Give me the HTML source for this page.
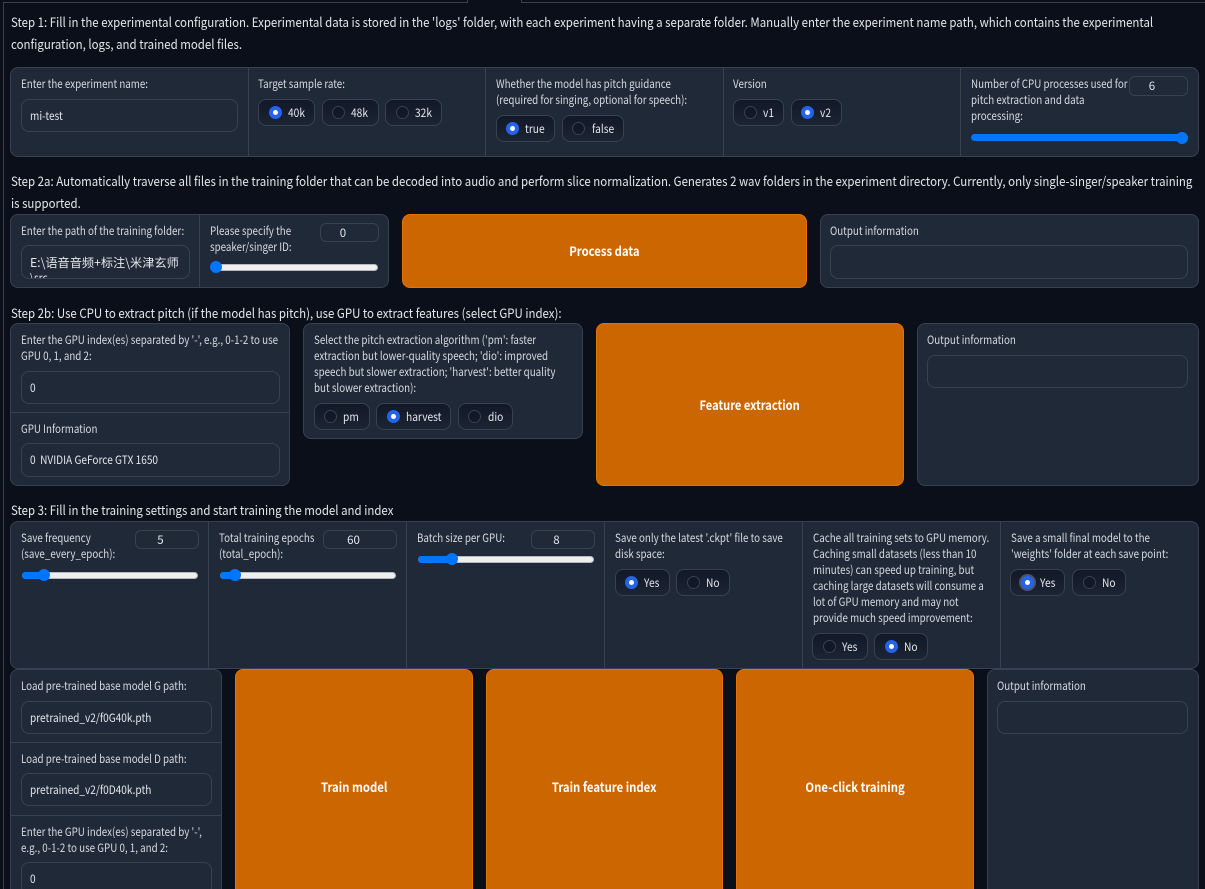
<!DOCTYPE html>
<html><head><meta charset="utf-8"><style>
html,body{margin:0;padding:0;width:1205px;height:889px;overflow:hidden;background:#0b0f19}
body{position:relative;font-family:"Noto Sans CJK SC","Liberation Sans",sans-serif;color:#e5e7eb;-webkit-font-smoothing:auto}
div,span{position:absolute;box-sizing:border-box}
.p{background:#1f2937;border:1px solid #374151;border-radius:8px}
.l{background:#374151}
.s{font-size:13px;line-height:22px;height:22px;white-space:nowrap;color:#e5e7eb;left:11px;transform-origin:0 50%;transform:scaleX(.881)}
.t{font-size:11.5px;line-height:16px;height:16px;white-space:nowrap;color:#d8dbe0;transform-origin:0 50%;transform:scaleX(.85)}
.i{border:1px solid #374151;border-radius:8px;background:#1f2937}
.v{font-size:11.5px;line-height:16px;height:16px;white-space:nowrap;color:#e5e7eb;transform-origin:0 50%;transform:scaleX(.877)}
.n{border:1px solid #374151;border-radius:6px;background:#1f2937;font-size:11.5px;line-height:19px;text-align:center;padding-right:13px;color:#e5e7eb}
.b{background:#cc6600;border:1px solid #e67300;border-radius:8px;color:#fff;font-size:13px;font-weight:700;display:flex;align-items:center;justify-content:center}
.b span{white-space:nowrap;transform:translateY(-1px) scaleX(.87)}
.r{height:27px;top:0;border:1px solid #374151;border-radius:8px;background:linear-gradient(180deg,#111827,#1c2534)}
.c{width:13px;height:13px;border-radius:50%;background:#111827;border:1px solid #374151}
.k{width:13px;height:13px;border-radius:50%;background:#2563eb;}
.k:after{content:"";position:absolute;left:4px;top:4px;width:5px;height:5px;border-radius:50%;background:#fff}
.o{font-size:11.5px;line-height:16px;white-space:nowrap;color:#e5e7eb;transform-origin:0 50%;transform:scaleX(.887)}
.tr{height:7px;border-radius:4px;background:#efefef;border:1px solid #b5b8bd}
.f{height:7px;border-radius:4px;background:#0075ff}
.h{width:12px;height:12px;border-radius:50%;background:#0075ff}
</style></head><body>

<div class="l" style="left:3px;top:2px;width:1px;height:887px"></div>
<div class="l" style="left:3px;top:2px;width:465px;height:1px"></div>
<div class="l" style="left:467px;top:0;width:1px;height:3px"></div>
<div class="l" style="left:521px;top:0;width:1px;height:3px"></div>
<div class="l" style="left:521px;top:2px;width:684px;height:1px"></div>

<div class="s" style="top:11px">Step 1: Fill in the experimental configuration. Experimental data is stored in the 'logs' folder, with each experiment having a separate folder. Manually enter the experiment name path, which contains the experimental</div>
<div class="s" style="top:33px">configuration, logs, and trained model files.</div>

<div class="p" style="left:10px;top:67px;width:1189px;height:90px"></div>
<div class="l" style="left:248px;top:68px;width:1px;height:88px"></div>
<div class="l" style="left:485px;top:68px;width:1px;height:88px"></div>
<div class="l" style="left:723px;top:68px;width:1px;height:88px"></div>
<div class="l" style="left:960px;top:68px;width:1px;height:88px"></div>

<div class="t" style="left:21px;top:76px">Enter the experiment name:</div>
<div class="i" style="left:21px;top:99px;width:217px;height:33px"></div>
<div class="v" style="left:30px;top:108px">mi-test</div>

<div class="t" style="left:258px;top:76px">Target sample rate:</div>
<div class="r" style="left:258px;top:99px;width:57px"></div><div class="k" style="left:269px;top:106px"></div><div class="o" style="left:288px;top:105px">40k</div>
<div class="r" style="left:322px;top:99px;width:57px"></div><div class="c" style="left:332px;top:106px"></div><div class="o" style="left:351px;top:105px">48k</div>
<div class="r" style="left:385px;top:99px;width:57px"></div><div class="c" style="left:396px;top:106px"></div><div class="o" style="left:415px;top:105px">32k</div>

<div class="t" style="left:496px;top:76px">Whether the model has pitch guidance</div>
<div class="t" style="left:496px;top:92px">(required for singing, optional for speech):</div>
<div class="r" style="left:496px;top:115px;width:59px"></div><div class="k" style="left:506px;top:122px"></div><div class="o" style="left:525px;top:121px">true</div>
<div class="r" style="left:562px;top:115px;width:62px"></div><div class="c" style="left:572px;top:122px"></div><div class="o" style="left:592px;top:121px">false</div>

<div class="t" style="left:733px;top:76px">Version</div>
<div class="r" style="left:733px;top:99px;width:51px"></div><div class="c" style="left:744px;top:106px"></div><div class="o" style="left:763px;top:105px">v1</div>
<div class="r" style="left:791px;top:99px;width:51px"></div><div class="k" style="left:801px;top:106px"></div><div class="o" style="left:820px;top:105px">v2</div>

<div class="t" style="left:971px;top:76px">Number of CPU processes used for</div>
<div class="t" style="left:971px;top:92px">pitch extraction and data</div>
<div class="t" style="left:971px;top:108px">processing:</div>
<div class="n" style="left:1129px;top:76px;width:59px;height:20px">6</div>
<div class="f" style="left:971px;top:134px;width:217px"></div><div class="h" style="left:1176px;top:132px"></div>

<div class="s" style="top:170px">Step 2a: Automatically traverse all files in the training folder that can be decoded into audio and perform slice normalization. Generates 2 wav folders in the experiment directory. Currently, only single-singer/speaker training</div>
<div class="s" style="top:192px">is supported.</div>

<div class="p" style="left:10px;top:214px;width:379px;height:74px"></div>
<div class="l" style="left:199px;top:215px;width:1px;height:72px"></div>
<div class="t" style="left:21px;top:223px">Enter the path of the training folder:</div>
<div class="i" style="left:21px;top:245px;width:169px;height:34px;overflow:hidden"><div class="v" style="left:8px;top:8px;font-size:12.2px;transform:none">E:\语音音频+标注\米津玄师</div><div class="v" style="left:8px;top:24px">\src</div></div>
<div class="t" style="left:210px;top:223px">Please specify the</div>
<div class="t" style="left:210px;top:239px">speaker/singer ID:</div>
<div class="n" style="left:320px;top:223px;width:59px;height:19px">0</div>
<div class="tr" style="left:211px;top:264px;width:167px"></div><div class="h" style="left:210px;top:261px"></div>

<div class="b" style="left:402px;top:214px;width:405px;height:74px"><span>Process data</span></div>

<div class="p" style="left:820px;top:214px;width:379px;height:74px"></div>
<div class="t" style="left:830px;top:223px">Output information</div>
<div class="i" style="left:830px;top:245px;width:358px;height:34px"></div>

<div class="s" style="top:302px">Step 2b: Use CPU to extract pitch (if the model has pitch), use GPU to extract features (select GPU index):</div>

<div class="p" style="left:10px;top:323px;width:280px;height:163px"></div>
<div class="t" style="left:21px;top:332px">Enter the GPU index(es) separated by '-', e.g., 0-1-2 to use</div>
<div class="t" style="left:21px;top:348px">GPU 0, 1, and 2:</div>
<div class="i" style="left:21px;top:371px;width:259px;height:33px"></div>
<div class="v" style="left:30px;top:380px">0</div>
<div class="l" style="left:11px;top:412px;width:278px;height:1px"></div>
<div class="t" style="left:21px;top:421px">GPU Information</div>
<div class="i" style="left:21px;top:443px;width:259px;height:34px"></div>
<div class="v" style="left:30px;top:452px">0&nbsp; NVIDIA GeForce GTX 1650</div>

<div class="p" style="left:303px;top:323px;width:280px;height:116px"></div>
<div class="t" style="left:314px;top:332px">Select the pitch extraction algorithm ('pm': faster</div>
<div class="t" style="left:314px;top:348px">extraction but lower-quality speech; 'dio': improved</div>
<div class="t" style="left:314px;top:364px">speech but slower extraction; 'harvest': better quality</div>
<div class="t" style="left:314px;top:380px">but slower extraction):</div>
<div class="r" style="left:314px;top:403px;width:56px"></div><div class="c" style="left:324px;top:410px"></div><div class="o" style="left:343px;top:409px">pm</div>
<div class="r" style="left:376px;top:403px;width:75px"></div><div class="k" style="left:387px;top:410px"></div><div class="o" style="left:406px;top:409px">harvest</div>
<div class="r" style="left:458px;top:403px;width:55px"></div><div class="c" style="left:468px;top:410px"></div><div class="o" style="left:488px;top:409px">dio</div>

<div class="b" style="left:596px;top:323px;width:308px;height:163px"><span style="transform:translateY(0) scaleX(.855)">Feature extraction</span></div>

<div class="p" style="left:917px;top:323px;width:282px;height:163px"></div>
<div class="t" style="left:927px;top:332px">Output information</div>
<div class="i" style="left:927px;top:355px;width:261px;height:33px"></div>

<div class="s" style="top:499px">Step 3: Fill in the training settings and start training the model and index</div>

<div class="p" style="left:10px;top:521px;width:1189px;height:148px"></div>
<div class="l" style="left:208px;top:522px;width:1px;height:146px"></div>
<div class="l" style="left:406px;top:522px;width:1px;height:146px"></div>
<div class="l" style="left:604px;top:522px;width:1px;height:146px"></div>
<div class="l" style="left:802px;top:522px;width:1px;height:146px"></div>
<div class="l" style="left:1000px;top:522px;width:1px;height:146px"></div>

<div class="t" style="left:21px;top:530px">Save frequency</div>
<div class="t" style="left:21px;top:546px">(save_every_epoch):</div>
<div class="n" style="left:135px;top:530px;width:64px;height:19px">5</div>
<div class="tr" style="left:22px;top:572px;width:176px"></div><div class="f" style="left:22px;top:572px;width:22px"></div><div class="h" style="left:38px;top:569px"></div>

<div class="t" style="left:219px;top:530px">Total training epochs</div>
<div class="t" style="left:219px;top:546px">(total_epoch):</div>
<div class="n" style="left:323px;top:530px;width:74px;height:19px">60</div>
<div class="tr" style="left:220px;top:572px;width:176px"></div><div class="f" style="left:220px;top:572px;width:15px"></div><div class="h" style="left:229px;top:569px"></div>

<div class="t" style="left:417px;top:530px">Batch size per GPU:</div>
<div class="n" style="left:531px;top:530px;width:64px;height:19px">8</div>
<div class="tr" style="left:418px;top:556px;width:176px"></div><div class="f" style="left:418px;top:556px;width:34px"></div><div class="h" style="left:446px;top:553px"></div>

<div class="t" style="left:615px;top:530px">Save only the latest '.ckpt' file to save</div>
<div class="t" style="left:615px;top:546px">disk space:</div>
<div class="r" style="left:615px;top:569px;width:55px"></div><div class="k" style="left:625px;top:576px"></div><div class="o" style="left:644px;top:575px">Yes</div>
<div class="r" style="left:676px;top:569px;width:54px"></div><div class="c" style="left:687px;top:576px"></div><div class="o" style="left:706px;top:575px">No</div>

<div class="t" style="left:813px;top:530px">Cache all training sets to GPU memory.</div>
<div class="t" style="left:813px;top:546px">Caching small datasets (less than 10</div>
<div class="t" style="left:813px;top:562px">minutes) can speed up training, but</div>
<div class="t" style="left:813px;top:578px">caching large datasets will consume a</div>
<div class="t" style="left:813px;top:594px">lot of GPU memory and may not</div>
<div class="t" style="left:813px;top:610px">provide much speed improvement:</div>
<div class="r" style="left:812px;top:633px;width:56px"></div><div class="c" style="left:823px;top:640px"></div><div class="o" style="left:842px;top:639px">Yes</div>
<div class="r" style="left:874px;top:633px;width:54px"></div><div class="k" style="left:885px;top:640px"></div><div class="o" style="left:904px;top:639px">No</div>

<div class="t" style="left:1011px;top:530px">Save a small final model to the</div>
<div class="t" style="left:1011px;top:546px">'weights' folder at each save point:</div>
<div class="r" style="left:1010px;top:569px;width:55px"></div><div class="k" style="left:1021px;top:576px;box-shadow:0 0 0 2px #4b5563"></div><div class="o" style="left:1040px;top:575px">Yes</div>
<div class="r" style="left:1072px;top:569px;width:54px"></div><div class="c" style="left:1083px;top:576px"></div><div class="o" style="left:1102px;top:575px">No</div>

<div class="p" style="left:10px;top:669px;width:212px;height:240px"></div>
<div class="t" style="left:21px;top:678px">Load pre-trained base model G path:</div>
<div class="i" style="left:21px;top:701px;width:191px;height:33px"></div>
<div class="v" style="left:30px;top:710px">pretrained_v2/f0G40k.pth</div>
<div class="l" style="left:11px;top:742px;width:210px;height:1px"></div>
<div class="t" style="left:21px;top:751px">Load pre-trained base model D path:</div>
<div class="i" style="left:21px;top:773px;width:191px;height:33px"></div>
<div class="v" style="left:30px;top:782px">pretrained_v2/f0D40k.pth</div>
<div class="l" style="left:11px;top:815px;width:210px;height:1px"></div>
<div class="t" style="left:21px;top:824px">Enter the GPU index(es) separated by '-',</div>
<div class="t" style="left:21px;top:840px">e.g., 0-1-2 to use GPU 0, 1, and 2:</div>
<div class="i" style="left:21px;top:862px;width:191px;height:33px"></div>
<div class="v" style="left:30px;top:871px">0</div>

<div class="b" style="left:235px;top:669px;width:238px;height:236px"><span>Train model</span></div>
<div class="b" style="left:486px;top:669px;width:237px;height:236px"><span>Train feature index</span></div>
<div class="b" style="left:736px;top:669px;width:238px;height:236px"><span>One-click training</span></div>

<div class="p" style="left:987px;top:669px;width:212px;height:240px"></div>
<div class="t" style="left:997px;top:678px">Output information</div>
<div class="i" style="left:997px;top:701px;width:191px;height:33px"></div>

</body></html>
